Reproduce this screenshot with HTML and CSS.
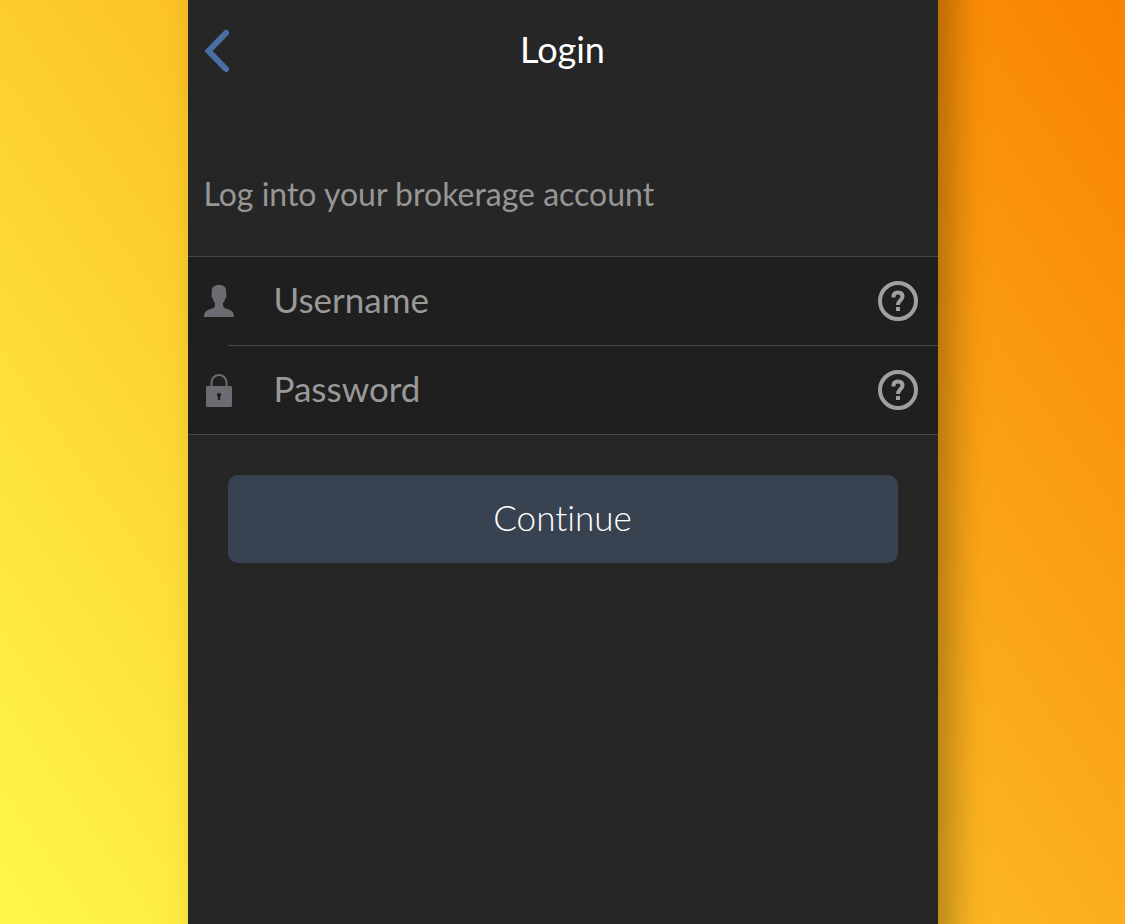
FILE: index.html
```html
<!doctype html>
<html lang="en">
    <head>
        <meta charset="UTF-8" />
        <meta name="viewport" content="width=device-width, initial-scale=1.0" />
        <title>Login</title>
        <link rel="stylesheet" href="styles.css">
    </head>
    <body>
        <div class="stage">
            <main class="screen">
                <header class="topbar">
                    <button type="button" class="back-btn" aria-label="Back">
                        <svg width="30" height="46" viewBox="0 0 30 46">
                            <path d="M22 5 4.500 23 22 41" />
                        </svg>
                    </button>
                    <h1>Login</h1>
                </header>

                <p class="intro">Log into your brokerage account</p>

                <form>
                    <div class="fields">
                        <div class="field">
                            <label for="username" aria-label="Username">
                                <svg width="30" height="34" viewBox="0 0 30 34">
                                    <path d="M15 1c5 0 7.500 2.500 7.200 7 .1 1 0 2 .1 2.600.6 1 0 3.200-1 3.800-.5 2.200-1.300 3.400-2.300 4.600v2.500c0 2 2 2.700 4.500 3.500C27.500 26.300 30 27.500 30 33H0c0-5.500 2.500-6.700 6.500-8 2.500-.8 4.500-1.500 4.500-3.500V19c-1-1.200-1.800-2.400-2.300-4.600-1-.6-1.600-2.800-1-3.800.1-.6 0-1.600.1-2.600C7.500 3.500 10 1 15 1z" />
                                </svg>
                            </label>
                            <input type="text" id="username" placeholder="Username" />
                            <button type="button" class="help-btn" aria-label="Username help">
                                <svg width="40" height="40" viewBox="0 0 40 40">
                                    <circle cx="20" cy="20" r="18" />
                                    <path d="M15.500 16.500v-1q0-4 4.500-4t4.500 4c0 3.500-4.500 4-4.500 8.500" />
                                    <rect x="18" y="26" width="4" height="4" />
                                </svg>
                            </button>
                        </div>
                        <div class="field">
                            <label for="password" aria-label="Password">
                                <svg width="30" height="34" viewBox="0 0 30 34">
                                    <path class="shackle" d="M7.500 14V9.500a7.500 7.500 0 0 1 15 0V14" />
                                    <path fill-rule="evenodd" d="M3.500 13h23a1.500 1.500 0 0 1 1.500 1.500v18a1.500 1.500 0 0 1-1.500 1.500h-23A1.500 1.500 0 0 1 2 32.500v-18A1.500 1.500 0 0 1 3.500 13zM15 19.800a2.200 2.200 0 0 0-1.200 4V27h2.400v-3.200a2.200 2.200 0 0 0-1.200-4z" />
                                </svg>
                            </label>
                            <input type="password" id="password" placeholder="Password" />
                            <button type="button" class="help-btn" aria-label="Password help">
                                <svg width="40" height="40" viewBox="0 0 40 40">
                                    <circle cx="20" cy="20" r="18" />
                                    <path d="M15.500 16.500v-1q0-4 4.500-4t4.500 4c0 3.500-4.500 4-4.500 8.500" />
                                    <rect x="18" y="26" width="4" height="4" />
                                </svg>
                            </button>
                        </div>
                    </div>
                    <button type="submit" class="continue-btn">Continue</button>
                </form>
            </main>
        </div>
    </body>
</html>
```
FILE: styles.css
```css
* {
    box-sizing: border-box;
}
body {
    margin: 0;
    font-family: Lato, "Open Sans", sans-serif;
}
.stage {
    min-height: 100vh;
    overflow: hidden;
    background: linear-gradient(55deg, #fff84a, #f98200);
}
.screen {
    position: relative;
    z-index: 0;
    width: 100%;
    max-width: 750px;
    min-height: 100vh;
    margin: 0 auto;
    background-color: #262626;
}
/* Shadow runs past the top and bottom edges so it doesn't fade there */
.screen::before {
    content: "";
    position: absolute;
    inset: -60px 0;
    z-index: -1;
    background-color: #262626;
    box-shadow: 16px 0 32px rgba(0, 0, 0, 0.28);
}
button {
    padding: 0;
    border: none;
    background: none;
    font-family: inherit;
    font-variant-ligatures: none;
    cursor: pointer;
}
svg {
    display: block;
}

/* Header */
.topbar {
    display: grid;
    grid-template-columns: 48px 1fr 48px;
    align-items: center;
    height: 102px;
    padding: 0 16px;
}
.back-btn svg {
    fill: none;
    stroke: #496fa5;
    stroke-width: 6;
    stroke-linecap: round;
}
h1 {
    margin: 0;
    padding-bottom: 4px;
    font-size: 36px;
    font-weight: 400;
    line-height: 40px;
    text-align: center;
    color: #fff;
}
.intro {
    margin: 0;
    padding: 72px 16px 42px;
    font-size: 32px;
    font-weight: 400;
    line-height: 40px;
    color: #969696;
}

/* Form fields */
.fields {
    background-color: #1f1f1f;
    border-top: 1px solid #484848;
    border-bottom: 1px solid #484848;
}
.field {
    display: flex;
    align-items: center;
    height: 88px;
    padding: 0 20px 0 16px;
}
.field + .field {
    height: 89px;
    background: linear-gradient(#484848, #484848) 40px 0 / 100% 1px no-repeat;
}
.field label {
    fill: #6c6b71;
}
.shackle {
    fill: none;
    stroke: #6c6b71;
    stroke-width: 2;
}
.field input {
    flex: 1;
    min-width: 0;
    margin-left: 40px;
    padding: 0 0 4px;
    border: none;
    outline: none;
    background: none;
    font-family: inherit;
    font-size: 35px;
    line-height: 40px;
    color: #fff;
}
.field input::placeholder {
    color: #999;
    opacity: 1;
}
.help-btn svg {
    fill: none;
    stroke: #a0a0a0;
    stroke-width: 4;
}
.help-btn rect {
    fill: #a0a0a0;
    stroke: none;
}

.continue-btn {
    display: block;
    width: calc(100% - 80px);
    height: 88px;
    margin: 40px auto 0;
    padding-bottom: 4px;
    border-radius: 10px;
    background-color: #394250;
    font-size: 35px;
    font-weight: 300;
    color: #fff;
}
```
